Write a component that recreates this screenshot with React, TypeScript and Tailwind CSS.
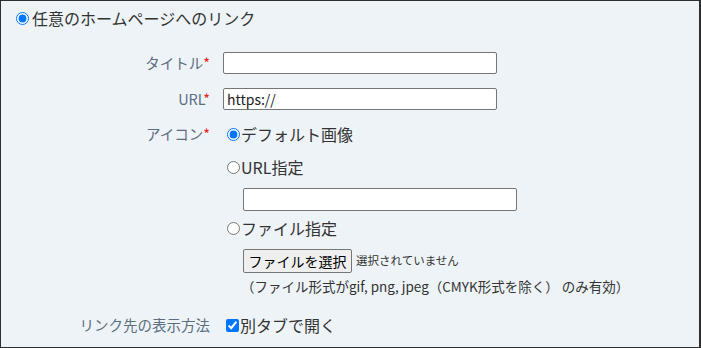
const font = { fontFamily: '"Noto Sans CJK JP", "Noto Sans", sans-serif' };

function Label({ text, required }: { text: string; required?: boolean }) {
  return (
    <div className="w-[209px] shrink-0 text-right text-[14.5px] leading-[22px] text-[#5b6e80]">
      {text}
      {required && <span className="text-[#e8201e]">*</span>}
    </div>
  );
}

export default function App() {
  return (
    <div
      style={font}
      className="w-[701px] h-[348px] overflow-hidden border border-r-2 border-[#2e2e2e] bg-[#eef3f7] text-[#333]"
    >
      <div className="mt-[7px] flex h-[20px] items-center pl-[15px]">
        <input type="radio" defaultChecked className="m-0 h-[13px] w-[13px] accent-[#0075ff]" />
        <span className="ml-[3px] text-[16px] leading-[20px]">任意のホームページへのリンク</span>
      </div>

      <div className="mt-[24px] flex items-center">
        <Label text="タイトル" required />
        <input className="ml-[13px] h-[22px] w-[274px] rounded-[2px] border border-[#767676] bg-white px-[3px] text-[14px] outline-none" />
      </div>

      <div className="mt-[14px] flex items-center">
        <Label text="URL" required />
        <input
          defaultValue="https://"
          className="ml-[13px] h-[22px] w-[274px] rounded-[2px] border border-[#767676] bg-white px-[3px] text-[14px] text-[#222] outline-none"
        />
      </div>

      <div className="mt-[13px] flex">
        <Label text="アイコン" required />
        <div className="ml-[17px] flex flex-col">
          <label className="flex h-[22px] items-center">
            <input type="radio" name="icon" defaultChecked className="m-0 h-[13px] w-[13px] accent-[#0075ff]" />
            <span className="ml-[1px] text-[16px]">デフォルト画像</span>
          </label>
          <label className="mt-[11px] flex h-[22px] items-center">
            <input type="radio" name="icon" className="m-0 h-[13px] w-[13px] accent-[#0075ff]" />
            <span className="ml-[1px] text-[16px]">URL指定</span>
          </label>
          <input className="ml-[16px] mt-[10px] h-[23px] w-[274px] rounded-[2px] border border-[#767676] bg-white px-[3px] text-[14px] outline-none" />
          <label className="mt-[6px] flex h-[22px] items-center">
            <input type="radio" name="icon" className="m-0 h-[13px] w-[13px] accent-[#0075ff]" />
            <span className="ml-[1px] text-[16px]">ファイル指定</span>
          </label>
          <div className="ml-[16px] mt-[10px] flex items-center">
            <button className="h-[24px] w-[109px] rounded-[2px] border border-[#767676] bg-[#efefef] text-[14px] font-normal text-black">
              ファイルを選択
            </button>
            <span className="ml-[4px] text-[11.5px] text-[#333]">選択されていません</span>
          </div>
          <div className="ml-[14px] mt-[4px] text-[13.5px] leading-[18px] text-[#333]">
            （ファイル形式がgif, png, jpeg（CMYK形式を除く） のみ有効）
          </div>
        </div>
      </div>

      <div className="mt-[19px] flex items-center">
        <Label text="リンク先の表示方法" />
        <label className="ml-[16px] flex h-[22px] items-center">
          <input type="checkbox" defaultChecked className="m-0 h-[13px] w-[13px] accent-[#0075ff]" />
          <span className="ml-[1px] text-[16px]">別タブで開く</span>
        </label>
      </div>
    </div>
  );
}
